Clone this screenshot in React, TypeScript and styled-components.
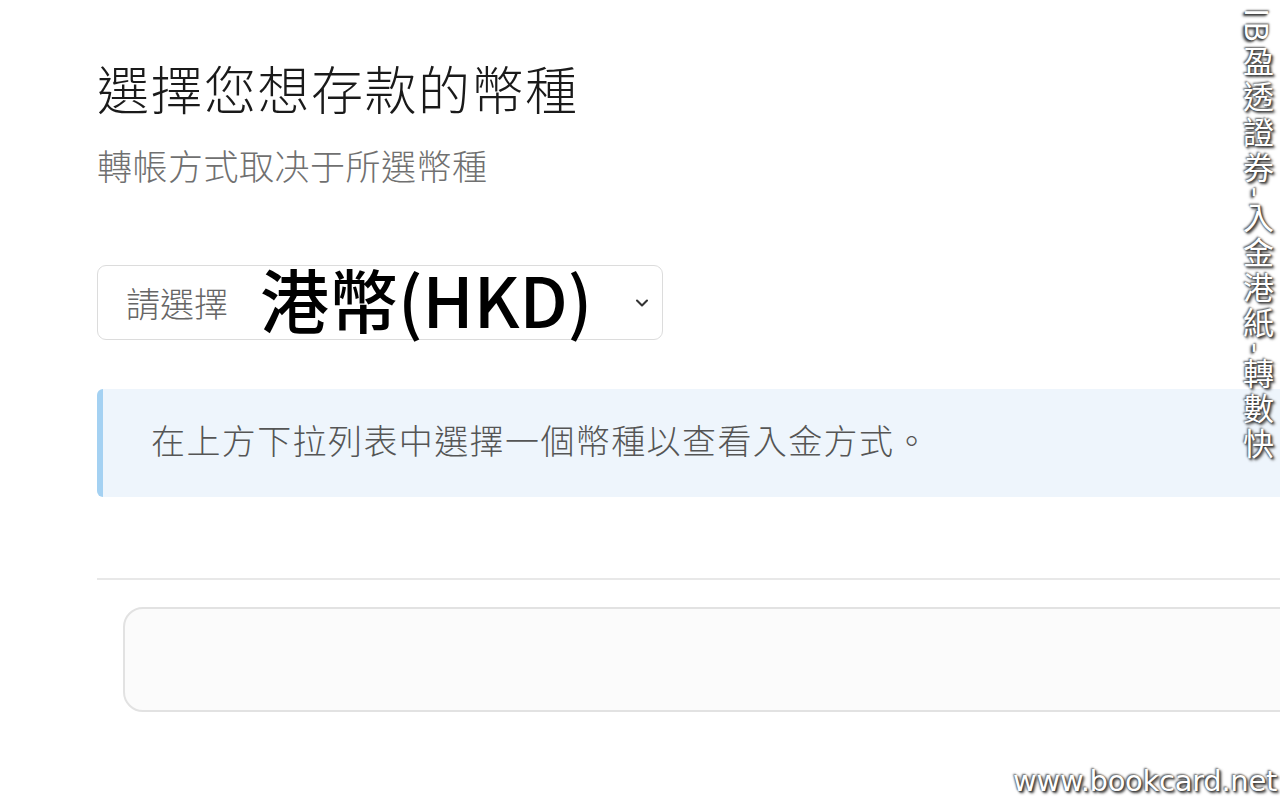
import * as React from "react";
import styled, { createGlobalStyle } from "styled-components";

const Global = createGlobalStyle`
  html, body {
    margin: 0;
    padding: 0;
    background: #ffffff;
    overflow: hidden;
  }
  body {
    font-family: "Noto Sans CJK TC", "Noto Sans", sans-serif;
  }
`;

const Page = styled.div`
  position: relative;
  width: 1280px;
  height: 800px;
  overflow: hidden;
`;

const Content = styled.div`
  width: 1400px;
  padding: 50px 0 0 97px;
  box-sizing: border-box;
  display: flex;
  flex-direction: column;
`;

const Title = styled.h1`
  margin: 0;
  font-size: 52px;
  font-weight: 300;
  line-height: 76px;
  color: #1a1a1a;
  letter-spacing: 1.5px;
`;

const Subtitle = styled.p`
  margin: 14px 0 0;
  font-size: 35px;
  font-weight: 300;
  line-height: 50px;
  color: #707070;
  letter-spacing: 0.5px;
`;

const SelectBox = styled.div`
  margin-top: 75px;
  width: 566px;
  height: 75px;
  box-sizing: border-box;
  border: 1.5px solid #dcdcdc;
  border-radius: 9px;
  display: flex;
  align-items: center;
  padding: 0 10px 0 28px;
  position: relative;
`;

const Placeholder = styled.span`
  font-size: 34px;
  font-weight: 300;
  color: #666;
`;

const Chosen = styled.span`
  margin: 0 0 8px 32px;
  font-family: "Noto Sans CJK TC", "Noto Sans", sans-serif;
  font-size: 69px;
  font-weight: 500;
  color: #000;
  line-height: 1;
  flex: 1;
`;

const Chevron = styled.svg`
  width: 20px;
  height: 20px;
  color: #333;
`;

const Notice = styled.div`
  margin-top: 49px;
  height: 108px;
  background: #eef5fc;
  border-left: 6px solid #a4d1f2;
  border-radius: 6px 0 0 6px;
  display: flex;
  align-items: center;
  padding: 0 0 8px 48px;
  box-sizing: border-box;
  font-size: 34px;
  font-weight: 300;
  color: #555;
  letter-spacing: 1.4px;
`;

const Divider = styled.hr`
  margin: 81px 0 0;
  border: 0;
  border-top: 2px solid #e8e8e8;
`;

const Card = styled.div`
  margin: 27px 0 0 26px;
  height: 105px;
  box-sizing: border-box;
  border: 2px solid #e2e2e2;
  border-radius: 20px;
  background: #fbfbfb;
`;

const SideMark = styled.div`
  position: absolute;
  top: 8px;
  right: 5px;
  writing-mode: vertical-rl;
  font-size: 31px;
  line-height: 34px;
  font-weight: 400;
  color: #ffffff;
  letter-spacing: 4.2px;
  text-shadow: 1px 1px 2px #333, -1px -1px 2px #555, 2px 2px 3px #444;
`;

const SiteMark = styled.div`
  position: absolute;
  right: 3px;
  bottom: 2px;
  font-family: "DejaVu Sans", sans-serif;
  font-size: 29px;
  color: #ffffff;
  letter-spacing: -0.3px;
  text-shadow: 1px 1px 2px #333, -1px -1px 2px #555, 2px 2px 3px #444;
`;

export default function App() {
  return (
    <Page>
      <Global />
      <Content>
        <Title>選擇您想存款的幣種</Title>
        <Subtitle>轉帳方式取决于所選幣種</Subtitle>
        <SelectBox>
          <Placeholder>請選擇</Placeholder>
          <Chosen>港幣(HKD)</Chosen>
          <Chevron viewBox="0 0 24 24" fill="none" stroke="currentColor" strokeWidth="2.5" strokeLinecap="round" strokeLinejoin="round">
            <path d="M6 9l6 6 6-6" />
          </Chevron>
        </SelectBox>
        <Notice>在上方下拉列表中選擇一個幣種以查看入金方式。</Notice>
        <Divider />
        <Card />
      </Content>
      <SideMark>IB盈透證券-入金港紙-轉數快</SideMark>
      <SiteMark>www.bookcard.net</SiteMark>
    </Page>
  );
}
